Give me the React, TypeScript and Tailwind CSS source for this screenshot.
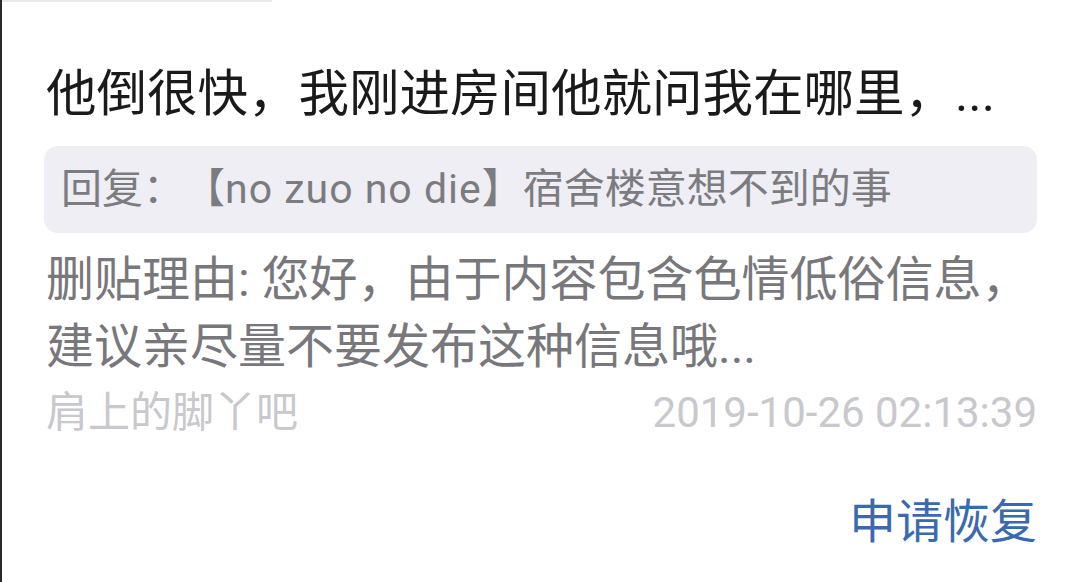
const font = { fontFamily: 'Roboto, "Noto Sans CJK SC", sans-serif' };

export default function App() {
  return (
    <div
      className="w-[1080px] h-[582px] bg-white border-l-2 border-[#2a2a2a] overflow-hidden"
      style={font}
    >
      <div className="h-[2px] w-[270px] bg-[#e6e8ea]" />
      <div className="pl-[42px] pr-[43px] [text-spacing-trim:space-all]">
        {/* title */}
        <div className="mt-[62px] pl-[2px] text-[50.5px] leading-[60px] text-[#1a1a1a] whitespace-nowrap">
          他倒很快，我刚进房间他就问我在哪里，...
        </div>

        {/* quoted thread */}
        <div className="mt-[22px] h-[87px] rounded-[14px] bg-[#eeeef4] pl-[17px] flex items-center">
          <span className="text-[41px] leading-none text-[#7b7b80] whitespace-nowrap">
            回复：【<span className="tracking-[1px]">no zuo no die</span>】宿舍楼意想不到的事
          </span>
        </div>

        {/* reason */}
        <div className="mt-[13px] pl-[2px] text-[48px] leading-[67px] text-[#77777c] whitespace-nowrap">
          <div>删贴理由: 您好，由于内容包含色情低俗信息，</div>
          <div>建议亲尽量不要发布这种信息哦...</div>
        </div>

        <div className="mt-[7px] pl-[2px] h-[50px] flex items-center justify-between text-[42px] text-[#c8c8cd]">
          <span>肩上的脚丫吧</span>
          <span>2019-10-26 02:13:39</span>
        </div>

        <div className="mt-[55px] flex justify-end">
          <button className="text-[47px] leading-[60px] text-[#3a6aae]">申请恢复</button>
        </div>
      </div>
    </div>
  );
}
